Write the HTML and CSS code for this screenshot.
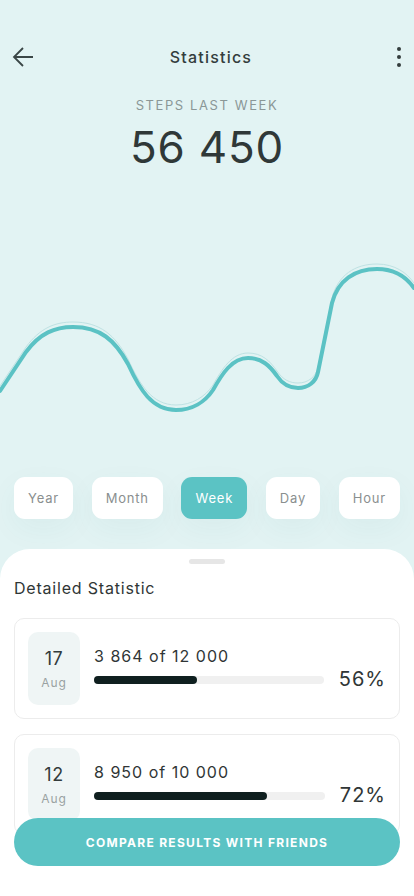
FILE: index.html
```html
<!DOCTYPE html>
<html lang="en">
<head>
    <meta charset="UTF-8">
    <meta name="viewport" content="width=device-width, initial-scale=1.0">
    <title>Statistics</title>
    <link rel="stylesheet" href="styles.css">
</head>
<body>
    <div class="screen">
        <div class="header">
            <button class="icon-btn">
                <svg width="22" height="22" viewBox="0 0 22 22"><path d="M21 11H2M11 2L2 11l9 9" fill="none" stroke="#3a4646" stroke-width="1.8"/></svg>
            </button>
            <h1>Statistics</h1>
            <button class="icon-btn">
                <svg width="22" height="22" viewBox="0 0 22 22"><circle cx="11" cy="3" r="2" fill="#333d3d"/><circle cx="11" cy="11" r="2" fill="#333d3d"/><circle cx="11" cy="19" r="2" fill="#333d3d"/></svg>
            </button>
        </div>

        <div class="summary">
            <div class="label">STEPS LAST WEEK</div>
            <div class="total">56 450</div>
        </div>

        <svg class="chart" width="414" height="200" viewBox="0 0 414 200">
            <path transform="translate(0,-5)" d="M0 151 L26 112 C40 93 55 87 73 87 C100 87 115 100 128 124 C140 150 152 170 176 170 C192 170 205 162 213 150 C222 134 232 118 248 118 C262 118 270 126 277 136 C283 145 290 148 298 148 C308 148 316 142 318 132 L332 63 C338 40 355 29 377 29 C395 29 407 38 414 48" fill="none" stroke="#bfe2e3" stroke-width="1"/>
            <path d="M0 151 L26 112 C40 93 55 87 73 87 C100 87 115 100 128 124 C140 150 152 170 176 170 C192 170 205 162 213 150 C222 134 232 118 248 118 C262 118 270 126 277 136 C283 145 290 148 298 148 C308 148 316 142 318 132 L332 63 C338 40 355 29 377 29 C395 29 407 38 414 48" fill="none" stroke="#5bc2c4" stroke-width="4" stroke-linecap="round"/>
        </svg>

        <div class="tabs">
            <div class="tab">Year</div>
            <div class="tab">Month</div>
            <div class="tab active">Week</div>
            <div class="tab">Day</div>
            <div class="tab">Hour</div>
        </div>

        <div class="sheet">
            <div class="handle"></div>
            <h2>Detailed Statistic</h2>

            <div class="card">
                <div class="date">
                    <span class="day">17</span>
                    <span class="month">Aug</span>
                </div>
                <div class="info">
                    <div class="steps">3 864 of 12 000</div>
                    <div class="bar"><div class="fill" style="width: 45%"></div></div>
                </div>
                <div class="percent">56%</div>
            </div>

            <div class="card">
                <div class="date">
                    <span class="day">12</span>
                    <span class="month">Aug</span>
                </div>
                <div class="info">
                    <div class="steps">8 950 of 10 000</div>
                    <div class="bar"><div class="fill" style="width: 75%"></div></div>
                </div>
                <div class="percent">72%</div>
            </div>
        </div>

        <button class="compare">COMPARE RESULTS WITH FRIENDS</button>
    </div>
</body>
</html>
```

FILE: styles.css
```css
*{
    box-sizing: border-box;
}

body{
    margin: 0;
    font-family: Inter, "Noto Sans", sans-serif;
    background: #e2f3f3;
    color: #2f3a3a;
}

.screen{
    position: relative;
    height: 896px;
    overflow: hidden;
    display: flex;
    flex-direction: column;
}

.header{
    display: flex;
    align-items: center;
    justify-content: space-between;
    height: 40px;
    margin-top: 37px;
    padding: 0 4px 0 12px;
}

.header h1{
    margin: 0;
    font-size: 16px;
    font-weight: 500;
    letter-spacing: 1.2px;
    color: #333d3d;
}

.icon-btn{
    width: 22px;
    height: 22px;
    padding: 0;
    border: none;
    background: none;
    display: flex;
}

.summary{
    text-align: center;
    margin-top: 18px;
}

.label{
    font-size: 13px;
    letter-spacing: 1.6px;
    color: #8a9797;
    line-height: 20px;
}

.total{
    font-size: 44px;
    letter-spacing: 0.8px;
    line-height: 50px;
    margin-top: 7px;
    color: #2f3838;
}

.chart{
    display: block;
    margin-top: 68px;
}

.tabs{
    display: flex;
    justify-content: space-between;
    padding: 0 14px;
    margin-top: 37px;
}

.tab{
    height: 42px;
    padding: 0 14px;
    display: flex;
    align-items: center;
    background: #fff;
    border-radius: 11px;
    font-size: 13px;
    letter-spacing: 0.8px;
    color: #8a8f8f;
    box-shadow: 0 10px 30px rgba(40, 110, 110, 0.05);
}

.tab.active{
    background: #5bc3c4;
    color: #fff;
}

.sheet{
    flex: 1;
    margin-top: 30px;
    background: #fff;
    border-radius: 30px 30px 0 0;
    padding: 10px 14px 0;
}

.handle{
    width: 36px;
    height: 5px;
    border-radius: 3px;
    background: #e6e6e6;
    margin: 0 auto;
}

.sheet h2{
    margin: 14px 0 20px;
    font-size: 16px;
    font-weight: 400;
    letter-spacing: 0.8px;
    line-height: 20px;
    color: #2f3636;
}

.card{
    display: flex;
    align-items: center;
    border: 1px solid #ececec;
    border-radius: 10px;
    padding: 13px 13px 13px 13px;
    margin-bottom: 15px;
}

.date{
    width: 52px;
    height: 73px;
    border-radius: 10px;
    background: #eff5f5;
    display: flex;
    flex-direction: column;
    align-items: center;
    justify-content: center;
}

.day{
    font-size: 18px;
    letter-spacing: 0.5px;
    color: #333b3b;
    line-height: 22px;
}

.month{
    margin-top: 5px;
    font-size: 12px;
    letter-spacing: 1px;
    color: #9aa2a2;
}

.info{
    flex: 1;
    margin-left: 14px;
    margin-bottom: 7px;
}

.steps{
    font-size: 16px;
    letter-spacing: 1px;
    line-height: 20px;
    color: #303636;
}

.bar{
    margin-top: 10px;
    height: 8px;
    border-radius: 4px;
    background: #f0f0f0;
}

.fill{
    height: 100%;
    border-radius: 4px;
    background: #0f1f1f;
}

.percent{
    margin-left: 15px;
    margin-top: 20px;
    font-size: 20px;
    letter-spacing: 1px;
    color: #303636;
}

.compare{
    position: absolute;
    left: 14px;
    right: 14px;
    bottom: 30px;
    height: 48px;
    border: none;
    border-radius: 24px;
    background: #5bc3c4;
    color: #fff;
    font-family: Inter, sans-serif;
    font-size: 12px;
    font-weight: 700;
    letter-spacing: 1.3px;
}
```
